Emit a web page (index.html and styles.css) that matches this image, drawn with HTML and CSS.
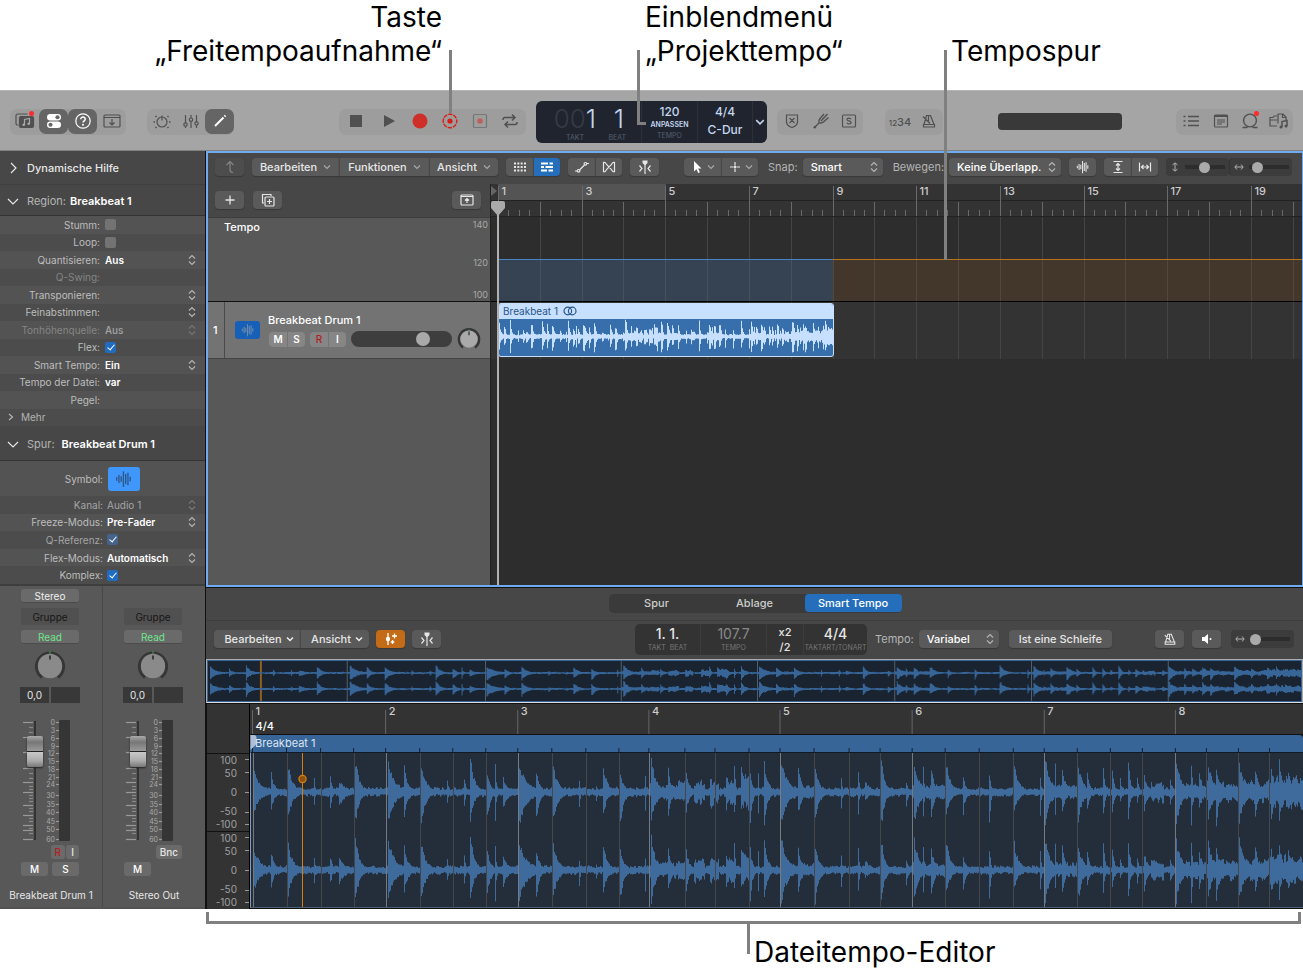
FILE: index.html
```html
<!DOCTYPE html>
<html lang="de">
<head>
<meta charset="utf-8">
<title>Dateitempo-Editor</title>
<link rel="stylesheet" href="styles.css">
</head>
<body>
<svg class="sprite" aria-hidden="true">
  <symbol id="updown" viewBox="0 0 8 12"><path d="M1 4.5 4 1.5 7 4.5M1 7.5 4 10.5 7 7.5"/></symbol>
  <symbol id="down" viewBox="0 0 8 6"><path d="M1 1.5 4 4.5 7 1.5"/></symbol>
  <symbol id="wave" viewBox="0 0 16 16"><path d="M1.500 6.500v3M3.500 4.500v7M5.500 5.500v5M7.500 1v14M9.500 3.500v9M11.500 2.500v11M13.500 6v4"/></symbol>
  <symbol id="metronome" viewBox="0 0 16 16"><path d="M5.500 2.500h4l3.500 9H3zM2.500 11.500h11v2.500h-11zM9 10.500 2 3.500"/><path d="M7.500 2.500v6"/></symbol>
  <symbol id="catch" viewBox="0 0 16 16"><path d="M5.500 1.500h5v2.500l-2 2h-1l-2-2z" fill="currentColor" stroke="none"/><path d="M8 5v10M2.500 6.500 5 9.500l-2.500 3M13.500 6.500 11 9.500l2.500 3"/></symbol>
  <symbol id="horiz" viewBox="0 0 12 10"><path d="M3.500 2 1 5l2.500 3M8.500 2 11 5 8.500 8M1.500 5h9"/></symbol>
</svg>

<header class="callouts">
  <p class="callout callout-right">Taste<br>„Freitempoaufnahme“</p>
  <p class="callout callout-mid">Einblendmenü<br>„Projekttempo“</p>
  <p class="callout callout-low">Tempospur</p>
</header>

<div class="app">
  <div class="lead lead-record"></div>
  <div class="lead lead-tempo"></div>
  <div class="lead lead-track"></div>

  <div class="control-bar">
    <div class="pill">
      <button class="tool w29" aria-label="Bibliothek"><svg class="i20" viewBox="0 0 20 20"><path d="M3.500 14H2.500a1.500 1.500 0 0 1-1.500-1.500v-8A1.500 1.500 0 0 1 2.500 3h10"/><rect x="4.500" y="5.500" width="14" height="11" rx="1.500" fill="currentColor"/><path d="M9.500 13.500v-5l5-1v5" stroke="#aaa"/><circle cx="8.700" cy="13.700" r="1.300" fill="#aaa" stroke="none"/><circle cx="13.700" cy="12.700" r="1.300" fill="#aaa" stroke="none"/></svg><i class="dot"></i></button>
      <button class="tool w29 on" aria-label="Informationen"><svg class="i20" viewBox="0 0 20 20"><rect x="3" y="3" width="14" height="6.500" rx="3.250" fill="currentColor" stroke="none"/><rect x="3" y="10.500" width="14" height="6.500" rx="3.250" fill="currentColor" stroke="none"/><circle cx="13.500" cy="6.250" r="2.100" fill="#666" stroke="none"/><circle cx="6.500" cy="13.750" r="2.100" fill="#666" stroke="none"/></svg></button>
      <button class="tool w29 on" aria-label="Schnellhilfe"><svg class="i20" viewBox="0 0 20 20"><circle cx="10" cy="10" r="7.200"/><path d="M7.800 8.200c0-3 4.500-2.800 4.400 0 0 1.600-2.200 1.700-2.200 3.400" stroke-width="1.500"/><circle cx="10" cy="13.700" r="1" fill="currentColor" stroke="none"/></svg></button>
      <button class="tool w29" aria-label="Symbolleiste"><svg class="i20" viewBox="0 0 20 20"><rect x="2" y="4" width="16" height="12" rx="1"/><path d="M2 6.500h16M10 8v6M7.500 11.500 10 14l2.500-2.500"/></svg></button>
    </div>
    <div class="pill m21">
      <button class="tool w29" aria-label="Smart Controls"><svg class="i20" viewBox="0 0 20 20"><circle cx="10" cy="11" r="5"/><path d="M10 4.500v5"/><path d="M1.500 11h1.500M17 11h1.500M3.500 5l1 1M16.500 5l-1 1M3.500 17l1-1M16.500 17l-1-1" stroke-width="1.600"/></svg></button>
      <button class="tool w29" aria-label="Mixer"><svg class="i20" viewBox="0 0 20 20"><path d="M4.500 4v8M4.500 15.500v1.500M10 4v3M10 10.500v6.500M15.500 4v7M15.500 14.500v2.500"/><circle cx="4.500" cy="13.500" r="1.700"/><circle cx="10" cy="8.700" r="1.700"/><circle cx="15.500" cy="12.500" r="1.700"/></svg></button>
      <button class="tool w29 on" aria-label="Editoren"><svg class="i20" viewBox="0 0 20 20"><path d="m5 15 8.500-8.500" stroke-width="2"/><path d="m14.500 5.500 1-1" stroke-width="2"/></svg></button>
    </div>
    <div class="pill transport">
      <button class="tool w33" aria-label="Stopp"><svg class="i20" viewBox="0 0 20 20"><rect x="4" y="4" width="12" height="12" fill="currentColor" stroke="none"/></svg></button>
      <button class="tool w33" aria-label="Wiedergabe"><svg class="i20" viewBox="0 0 20 20"><path d="M5 4v12l11-6z" fill="currentColor" stroke="none"/></svg></button>
      <button class="tool w30 red" aria-label="Aufnahme"><svg class="i20" viewBox="0 0 20 20"><circle cx="10" cy="10" r="7.500" fill="currentColor" stroke="none"/></svg></button>
      <button class="tool w30 bright" aria-label="Freitempoaufnahme"><svg class="i20" viewBox="0 0 20 20"><circle cx="10" cy="10" r="6.800" stroke-width="1.400" stroke-dasharray="4.340 1" stroke-dashoffset="2"/><circle cx="10" cy="10" r="2.600" fill="currentColor" stroke="none"/></svg></button>
      <button class="tool w29" aria-label="Als Aufnahme erfassen"><svg class="i20 dim" viewBox="0 0 20 20"><rect x="3.500" y="3.500" width="13" height="13" rx="1"/><circle cx="10" cy="10" r="2.800" fill="#e02020" stroke="none"/></svg></button>
      <button class="tool w32" aria-label="Cycle"><svg class="i20" viewBox="0 0 20 20"><path d="M3 9V8.500a2 2 0 0 1 2-2h9M12 3.500l3 3-3 3M17 11v.5a2 2 0 0 1-2 2H6M8 10.500l-3 3 3 3" stroke-width="1.500"/></svg></button>
    </div>
    <div class="lcd">
      <div class="lcd-pos"><span class="big"><i>00</i>1</span><small>TAKT</small></div>
      <div class="lcd-pos lcd-beat"><span class="big">1</span><small>BEAT</small></div>
      <div class="lcd-tempo"><b>120</b><strong>ANPASSEN</strong><small>TEMPO</small></div>
      <div class="lcd-key"><b>4/4</b><b>C-Dur</b></div>
      <button class="lcd-more" aria-label="Display-Optionen"><svg class="i10" viewBox="0 0 8 6"><path d="M1 1.500 4 4.500 7 1.500"/></svg></button>
    </div>
    <div class="pill m10">
      <button class="tool w29" aria-label="Ersetzen"><svg class="i20" viewBox="0 0 20 20"><path d="M4.500 4h11v7c0 3-2.500 4.500-5.500 5.500-3-1-5.500-2.500-5.500-5.500zM7.500 7l5 5M12.500 7l-5 5"/></svg></button>
      <button class="tool w29" aria-label="Stimmgerät"><svg class="i20" viewBox="0 0 20 20"><path d="M3 17l1.500-1.500" stroke-width="2.400"/><path d="M4 16l4.500-4.500M8.300 11.700C7.500 10 7.800 8.800 9.500 7L13 3M8.300 11.700c1.700.8 3 .4 4.700-1.200l4.500-4M10 10l6.500-7" stroke-width="1.400"/></svg></button>
      <button class="tool w28" aria-label="Solo"><svg class="i20" viewBox="0 0 20 20"><rect x="3.500" y="4" width="13" height="12" rx="1"/><path d="M12 8.300c-.5-1.600-4-1.600-4 .1 0 1.900 4.200 1 4.200 3.100 0 1.800-3.900 1.900-4.400.1"/></svg></button>
    </div>
    <div class="pill m22">
      <button class="tool w30 count" aria-label="Einzähler"><small>12</small>34</button>
      <button class="tool w28" aria-label="Metronom"><svg class="i16"><use href="#metronome"/></svg></button>
    </div>
    <div class="master"></div>
    <div class="pill last">
      <button class="tool w30" aria-label="Listeneditoren"><svg class="i20" viewBox="0 0 20 20"><path d="M7 5.500h11M7 10h11M7 14.500h11M2.500 5.500h2M2.500 10h2M2.500 14.500h2" stroke-width="1.400"/></svg></button>
      <button class="tool w29" aria-label="Notizblock"><svg class="i20" viewBox="0 0 20 20"><rect x="3.500" y="4" width="13" height="12" rx="1"/><path d="M3.500 5.500h13M3.500 4.500h13M6 9h8M6 11h8M6 13h5"/></svg></button>
      <button class="tool w29" aria-label="Loops"><svg class="i20" viewBox="0 0 20 20"><circle cx="10" cy="9.500" r="6.400" stroke-width="1.400"/><path d="M2.500 16.500h4l1.500-1M17.500 16.500h-4l-1.500-1" stroke-width="1.400"/></svg><i class="dot"></i></button>
      <button class="tool w29" aria-label="Browser"><svg class="i20" viewBox="0 0 20 20"><path d="M8 15H1V6.500h3l1-1.500h3M1 9h7M9 12.500V3h5l3 3v3M13.500 3v3.500H17"/><path d="M13 16v-5.500l5-1V15" stroke-width="1.500"/><circle cx="12" cy="16" r="1.500" fill="currentColor" stroke="none"/><circle cx="17" cy="15" r="1.500" fill="currentColor" stroke="none"/></svg></button>
    </div>
  </div>

  <div class="workspace">
    <aside class="sidebar">
      <h2 class="sec"><svg class="i12" viewBox="0 0 12 12"><path d="M4 1 9 6 4 11"/></svg><b>Dynamische Hilfe</b></h2>
      <h2 class="sec sec-region"><svg class="i12" viewBox="0 0 12 12"><path d="M1 4 6 9 11 4"/></svg><span>Region:</span><strong>Breakbeat 1</strong></h2>
      <div class="rows region-rows">
        <div class="row"><label for="r1">Stumm:</label><input id="r1" type="checkbox"></div>
        <div class="row"><label for="r2">Loop:</label><input id="r2" type="checkbox"></div>
        <div class="row"><label for="r3">Quantisieren:</label><select id="r3"><option>Aus</option></select><svg class="ud"><use href="#updown"/></svg></div>
        <div class="row off"><label for="r4">Q-Swing:</label><output id="r4"></output></div>
        <div class="row"><label for="r5">Transponieren:</label><select id="r5"><option></option></select><svg class="ud"><use href="#updown"/></svg></div>
        <div class="row"><label for="r6">Feinabstimmen:</label><select id="r6"><option></option></select><svg class="ud"><use href="#updown"/></svg></div>
        <div class="row off"><label for="r7">Tonhöhenquelle:</label><select id="r7" disabled><option>Aus</option></select><svg class="ud"><use href="#updown"/></svg></div>
        <div class="row"><label for="r8">Flex:</label><input id="r8" type="checkbox" checked></div>
        <div class="row"><label for="r9">Smart Tempo:</label><select id="r9"><option>Ein</option></select><svg class="ud"><use href="#updown"/></svg></div>
        <div class="row"><label for="r10">Tempo der Datei:</label><output id="r10">var</output></div>
        <div class="row"><label for="r11">Pegel:</label><output id="r11"></output></div>
        <button class="more"><svg class="i8" viewBox="0 0 8 8"><path d="M2 1 5.500 4 2 7"/></svg>Mehr</button>
      </div>
      <h2 class="sec sec-track"><svg class="i12" viewBox="0 0 12 12"><path d="M1 4 6 9 11 4"/></svg><span>Spur:</span><strong class="wide">Breakbeat Drum 1</strong></h2>
      <div class="row symbol-row"><label for="t0">Symbol:</label><button id="t0" class="symbol"><svg class="i18"><use href="#wave"/></svg></button></div>
      <div class="rows track-rows">
        <div class="row semi"><label for="t1">Kanal:</label><select id="t1" disabled><option>Audio 1</option></select><svg class="ud"><use href="#updown"/></svg></div>
        <div class="row"><label for="t2">Freeze-Modus:</label><select id="t2"><option>Pre-Fader</option></select><svg class="ud"><use href="#updown"/></svg></div>
        <div class="row semi"><label for="t3">Q-Referenz:</label><input id="t3" type="checkbox" checked disabled></div>
        <div class="row"><label for="t4">Flex-Modus:</label><select id="t4"><option>Automatisch</option></select><svg class="ud"><use href="#updown"/></svg></div>
        <div class="row"><label for="t5">Komplex:</label><input id="t5" type="checkbox" checked></div>
      </div>
      <div class="mixer">
        <section class="strip">
          <button class="chip">Stereo</button>
          <button class="chip flat">Gruppe</button>
          <button class="chip read">Read</button>
          <svg class="knob" viewBox="0 0 32 32"><path d="M8 27.500a13.600 13.600 0 1 1 16 0" class="ring"/><circle cx="16" cy="16" r="12.200"/><path d="M16 5.500v4" class="tick"/><path d="M16 1v3" class="mark"/></svg>
          <div class="values"><span>0,0</span><span></span></div>
          <div class="fader"><svg class="scale"></svg><input type="range" aria-label="Lautstärke Breakbeat Drum 1" min="0" max="100" value="82"></div>
          <div class="ri"><button class="rec">R</button><button>I</button></div>
          <div class="ms"><button>M</button><button>S</button></div>
          <p>Breakbeat Drum 1</p>
        </section>
        <section class="strip">
          <span class="chip-space"></span>
          <button class="chip flat">Gruppe</button>
          <button class="chip read">Read</button>
          <svg class="knob" viewBox="0 0 32 32"><path d="M8 27.500a13.600 13.600 0 1 1 16 0" class="ring"/><circle cx="16" cy="16" r="12.200"/><path d="M16 5.500v4" class="tick"/><path d="M16 1v3" class="mark"/></svg>
          <div class="values"><span>0,0</span><span></span></div>
          <div class="fader"><svg class="scale"></svg><input type="range" aria-label="Lautstärke Stereo Out" min="0" max="100" value="82"></div>
          <div class="ri"><button>Bnc</button></div>
          <div class="ms"><button>M</button></div>
          <p>Stereo Out</p>
        </section>
      </div>
    </aside>

    <main class="main">
      <section class="arrange">
        <div class="bar">
          <button class="btn w29 faint" aria-label="Zurück"><svg class="i14" viewBox="0 0 14 14"><path d="M3.500 5 7 1.500 10.500 5M7 2v7.500q0 3 3 3"/></svg></button>
          <div class="group m8">
            <button class="btn menu w87">Bearbeiten<svg class="dn"><use href="#down"/></svg></button>
            <button class="btn menu w90">Funktionen<svg class="dn"><use href="#down"/></svg></button>
            <button class="btn menu w69">Ansicht<svg class="dn"><use href="#down"/></svg></button>
          </div>
          <div class="group m8">
            <button class="btn w27" aria-label="Raster"><svg class="i14" viewBox="0 0 14 14"><path d="M1 3.500h12M1 7h12M1 10.500h12" stroke-width="2" stroke-dasharray="2 1.330"/></svg></button>
            <button class="btn w27 blue" aria-label="Spuren"><svg class="i14" viewBox="0 0 14 14"><path d="M1 3.500h7M9.500 3.500H13M1 7h3M5.500 7H13M1 10.500h6M8.500 10.500H13" stroke-width="2"/></svg></button>
          </div>
          <div class="group m8">
            <button class="btn w27" aria-label="Automation"><svg class="i14" viewBox="0 0 14 14"><path d="M0 11h2.500M4.500 10 9.500 5M11.500 3.500H14"/><circle cx="3.600" cy="10.800" r="1.300"/><circle cx="10.400" cy="3.800" r="1.300"/></svg></button>
            <button class="btn w27" aria-label="Flex"><svg class="i14" viewBox="0 0 14 14"><path d="M1.500 2v10M12.500 2v10M1.500 2q2 0 3.500 3l4 4q1.500 3 3.500 3M12.500 2q-2 0-3.500 3L5 9q-1.500 3-3.500 3"/></svg></button>
          </div>
          <button class="btn w29 m8" aria-label="Playhead folgen"><svg class="i16"><use href="#catch"/></svg></button>
          <div class="group m25">
            <button class="btn w37 tooltype" aria-label="Zeiger-Werkzeug"><svg class="i14" viewBox="0 0 14 14"><path d="M4 1v10.500l2.500-2.200 1.700 3.700 1.700-.8L8.200 8.600h3.300z" fill="#fff" stroke="none"/></svg><svg class="dn"><use href="#down"/></svg></button>
            <button class="btn w37 tooltype" aria-label="Marquee-Werkzeug"><svg class="i14" viewBox="0 0 14 14"><path d="M7 2v3.500M7 8.500V12M2 7h3.500M8.500 7H12"/><circle cx="7" cy="7" r=".7"/></svg><svg class="dn"><use href="#down"/></svg></button>
          </div>
          <label class="cap m10" for="snap">Snap:</label>
          <span class="pick w80"><select id="snap"><option>Smart</option></select><svg class="ud"><use href="#updown"/></svg></span>
          <label class="cap m10" for="move">Bewegen:</label>
          <span class="pick w112"><select id="move"><option>Keine Überlapp.</option></select><svg class="ud"><use href="#updown"/></svg></span>
          <button class="btn w27 m8" aria-label="Wellenform-Zoom"><svg class="i14"><use href="#wave"/></svg></button>
          <div class="group m8">
            <button class="btn w27" aria-label="Vertikal zoomen"><svg class="i14" viewBox="0 0 14 14"><path d="M2.500 1.500h9M2.500 12.500h9M7 3.500v7M5 5.500l2-2 2 2M5 8.500l2 2 2-2"/></svg></button>
            <button class="btn w27" aria-label="Horizontal zoomen"><svg class="i14" viewBox="0 0 14 14"><path d="M1.500 2.500v9M12.500 2.500v9M3.500 7h7M5.500 5l-2 2 2 2M8.500 5l2 2-2 2"/></svg></button>
          </div>
          <div class="zoom m8"><svg class="i10" viewBox="0 0 10 12"><path d="M2 3.500 5 1l3 2.500M2 8.500 5 11l3-2.500M5 1.500v9"/></svg><input type="range" aria-label="Vertikaler Zoom" value="48"></div>
          <div class="zoom second"><svg class="i10"><use href="#horiz"/></svg><input type="range" aria-label="Horizontaler Zoom" value="10"></div>
        </div>
        <div class="tracks">
          <div class="heads">
            <div class="head-tools">
              <button class="btn w29" aria-label="Spur hinzufügen"><svg class="i14" viewBox="0 0 14 14"><path d="M7 2.500v9M2.500 7h9" stroke-width="1.300"/></svg></button>
              <button class="btn w29" aria-label="Spur duplizieren"><svg class="i14" viewBox="0 0 14 14"><path d="M3 10H1.500V1.500H10V3M8.500 6v5M6 8.500h5"/><rect x="4" y="4" width="9" height="9" rx="1"/></svg></button>
              <button class="btn w29 end" aria-label="Globale Spuren"><svg class="i14" viewBox="0 0 14 14"><rect x="1" y="2" width="12" height="10" rx="1"/><path d="M1 3.500h12M7 10V6M5 7.500l2-2 2 2"/></svg></button>
            </div>
            <div class="tempo-head"><span>Tempo</span><div class="tempo-scale"><i>140</i><i>120</i><i>100</i></div></div>
            <div class="track-head">
              <span class="num">1</span>
              <span class="badge"><svg class="i14"><use href="#wave"/></svg></span>
              <div class="track-info">
                <b>Breakbeat Drum 1</b>
                <div class="track-ctl">
                  <div class="group"><button>M</button><button>S</button></div>
                  <div class="group"><button class="rec">R</button><button>I</button></div>
                  <input class="vol" type="range" aria-label="Spurlautstärke" value="75">
                </div>
              </div>
              <svg class="knob small" viewBox="0 0 32 32"><path d="M8 27.500a13.600 13.600 0 1 1 16 0" class="ring"/><circle cx="16" cy="16" r="11.500"/><path d="M16 6v5" class="tick"/><path d="M16 3v3" class="mark"/></svg>
            </div>
          </div>
          <div class="timeline">
            <svg class="ruler" id="ruler"></svg>
            <div class="tempo-lane"><svg class="gridlines"></svg><div class="tempo-blue"></div><div class="tempo-orange"></div></div>
            <div class="track-lane"><svg class="gridlines"></svg>
              <div class="region"><div class="region-name">Breakbeat 1 <svg class="loops" viewBox="0 0 14 10"><circle cx="4.800" cy="5" r="3.800"/><circle cx="9.200" cy="5" r="3.800"/></svg></div><svg id="regionWave" viewBox="0 0 334 38" preserveAspectRatio="none"></svg></div>
            </div>
            <div class="playhead"><svg viewBox="0 0 14 15"><path d="M2 0h10q2 0 2 2v5l-7 8-7-8V2q0-2 2-2z"/></svg></div>
          </div>
        </div>
      </section>

      <section class="editor">
        <div class="tabs"><div class="tabset"><button>Spur</button><button>Ablage</button><button class="active">Smart Tempo</button></div></div>
        <div class="bar editor-bar">
          <div class="side">
            <div class="group"><button class="btn menu w86">Bearbeiten<svg class="dn"><use href="#down"/></svg></button><button class="btn menu w69">Ansicht<svg class="dn"><use href="#down"/></svg></button></div>
            <button class="btn w29 orange" aria-label="Tempo bearbeiten"><svg class="i14" viewBox="0 0 14 14"><path d="M4 1v12" stroke-width="1.300"/><circle cx="4" cy="7" r="2.200" fill="#fff" stroke="none"/><path d="M10.500 1.500v5M8 4h5M8.500 8v4M6.800 10h3.500" stroke-width="1.300"/></svg></button>
            <button class="btn w29" aria-label="Playhead folgen"><svg class="i16"><use href="#catch"/></svg></button>
          </div>
          <div class="readout">
            <div class="c1"><b>1. 1.</b><small>TAKT&nbsp; BEAT</small></div>
            <div class="c2"><b>107.7</b><small>TEMPO</small></div>
            <div class="c3"><button>x2</button><button>/2</button></div>
            <div class="c4"><b>4/4</b><small>TAKTART/TONART</small></div>
          </div>
          <label class="cap m8" for="vari">Tempo:</label>
          <span class="pick w80"><select id="vari"><option>Variabel</option></select><svg class="ud"><use href="#updown"/></svg></span>
          <button class="btn w103 m10">Ist eine Schleife</button>
          <button class="btn w29 end" aria-label="Klick"><svg class="i14"><use href="#metronome"/></svg></button>
          <button class="btn w29 m8" aria-label="Vorhören"><svg class="i14" viewBox="0 0 14 14"><path d="M2 5h2.500L8 2v10L4.500 9H2z" fill="#fff" stroke="none"/><circle cx="10.500" cy="7" r="1" fill="#fff" stroke="none"/></svg></button>
          <div class="zoom m10"><svg class="i10"><use href="#horiz"/></svg><input type="range" aria-label="Zoom" value="0"></div>
        </div>
        <div class="overview"><svg id="overviewWave" viewBox="0 0 1095 40" preserveAspectRatio="none"></svg></div>
        <div class="file">
          <div class="gutter">
            <div class="gutter-top"></div>
            <div class="amps"><i>100</i><i>50</i><i>0</i><i>-50</i><i>-100</i></div>
            <div class="amps"><i>100</i><i>50</i><i>0</i><i>-50</i><i>-100</i></div>
          </div>
          <div class="file-body">
            <svg class="file-ruler" id="fileRuler"></svg>
            <div class="file-name"><svg class="flag" viewBox="0 0 6 15"><path d="M0 0h3q3 0 3 3v6L0 15z"/></svg><span>Breakbeat 1</span><svg class="ticks" id="fileTicks"></svg></div>
            <div class="file-wave"><svg id="fileWave" viewBox="0 0 1052 154" preserveAspectRatio="none"></svg><svg id="fileBeats"></svg></div>
          </div>
        </div>
      </section>
    </main>
  </div>
</div>

<footer class="foot">
  <div class="bracket"></div>
  <p class="foot-label">Dateitempo-Editor</p>
</footer>
<script src="app.js"></script>
</body>
</html>
```
FILE: styles.css
```css
* { box-sizing: border-box; }
body { margin: 0; background: #fff; color: #e6e6e6; font: 11px/14px Inter, "Liberation Sans", sans-serif; }
p, h2 { margin: 0; font-weight: 400; }
i { font-style: normal; }
button, select, input { margin: 0; padding: 0; border: 0; font: inherit; color: inherit; background: none; }
button { display: flex; align-items: center; justify-content: center; white-space: nowrap; }
select { appearance: none; outline: 0; }
svg { display: block; flex: none; fill: none; stroke: currentColor; stroke-width: 1.2; stroke-linecap: butt; }
.sprite { position: absolute; width: 0; height: 0; }
.i8 { width: 8px; height: 8px; }
.i10 { width: 10px; height: 10px; }
.i12 { width: 12px; height: 12px; }
.i14 { width: 14px; height: 14px; }
.i16 { width: 16px; height: 16px; }
.i18 { width: 18px; height: 18px; }
.i20 { width: 20px; height: 20px; }
.w27 { width: 27px; }
.w28 { width: 28px; }
.w29 { width: 29px; }
.w30 { width: 30px; }
.w32 { width: 32px; }
.w33 { width: 33px; }
.w37 { width: 37px; }
.w69 { width: 69px; }
.w80 { width: 80px; }
.w86 { width: 86px; }
.w87 { width: 87px; }
.w90 { width: 90px; }
.w103 { width: 103px; }
.w112 { width: 112px; }
.m8 { margin-left: 8px; }
.m10 { margin-left: 10px; }
.m21 { margin-left: 21px; }
.m22 { margin-left: 22px; }
.m25 { margin-left: 25px; }

/* Callouts */
.callouts { display: grid; grid-template-columns: 442px 509px 1fr; height: 90px; color: #000; }
.callout { font-size: 28px; line-height: 34px; white-space: nowrap; }
.callout-right { text-align: right; }
.callout-mid { padding-left: 203px; }
.callout-low { padding-top: 34px; }
.callouts, .foot-label { font-size: 28px; }
.lead { position: absolute; z-index: 5; width: 3px; background: #808080; }
.lead-record { left: 449px; top: -40px; height: 63px; }
.lead-tempo { left: 637px; top: -40px; width: 9px; height: 75px; background: none; border: solid #808080; border-width: 0 0 3px 3px; }
.lead-track { left: 944px; top: -40px; height: 210px; }
.foot { color: #000; padding: 3px 2px 2px 206px; }
.bracket { height: 12px; border: solid #808080; border-width: 0 3px 3px; }
.foot-label { margin-left: 541px; padding: 11px 0 0 7px; background: linear-gradient(#808080, #808080) left top / 3px 30px no-repeat; line-height: 35px; }

/* Control bar */
.app { position: relative; background: #1a1a1a; }
.control-bar { display: flex; align-items: center; height: 61px; padding: 2px 10px 0; background: #a5a5a5; border-top: 1px solid #b4b4b4; border-bottom: 1px solid #808080; }
.pill { display: flex; height: 26px; border-radius: 7px; background: #9d9d9d; color: #505050; }
.tool { position: relative; height: 25px; border-radius: 7px; }
.tool.on { background: #656565; color: #fff; }
.dot { position: absolute; right: 5px; top: 2px; width: 5px; height: 5px; border-radius: 50%; background: #ff2a2a; }
.transport { margin-left: 105px; }
.red { color: #ce3029; }
.bright { color: #d81d16; }
.dim { opacity: .5; }
.count { font-size: 11px; font-weight: 500; align-items: baseline; padding-top: 6px; }
.count small { font-size: 8px; }
.lcd { display: grid; grid-template-columns: 60px 45px 56px 55px 15px; width: 231px; height: 42px; margin-left: 10px; border-radius: 6px; background: #20242f; color: #c3d6ee; }
.lcd > * { display: flex; flex-direction: column; align-items: center; }
.lcd small { color: #56606f; font-size: 7px; line-height: 9px; }
.lcd .lcd-pos { align-items: flex-end; padding-top: 4px; }
.lcd-pos small { padding-right: 12px; }
.big { font-size: 26px; line-height: 28px; font-weight: 300; }
.big i { color: #363b46; }
.lcd-beat { padding-right: 5px; }
.lcd-beat .big { padding-right: 12px; }
.lcd-beat small { padding-right: 10px; }
.lcd-tempo, .lcd-key { border-left: 1px solid #2c303b; }
.lcd-tempo { padding-top: 4px; }
.lcd-tempo b, .lcd-key b { font-size: 12px; font-weight: 500; }
.lcd-tempo strong { font-size: 7px; line-height: 11px; font-weight: 600; }
.lcd-tempo small { line-height: 11px; }
.lcd-key { justify-content: space-between; padding: 4px 0 6px; }
.lcd-more { justify-content: center; border-left: 1px solid #2c303b; }
.master { width: 124px; height: 17px; margin-left: 55px; border-radius: 4px; background: #393939; }
.last { margin-left: auto; }

/* Sidebar */
.workspace { display: flex; }
.sidebar { width: 205px; background: #535353; }
.sec { display: flex; align-items: center; height: 34px; padding-left: 7px; border-bottom: 1px solid #3f3f3f; background: #474747; font-size: 11px; }
.sec-region { height: 31px; padding-top: 2px; border-bottom-color: #333; }
.sec-track { height: 35px; padding-top: 2px; border-bottom-color: #333; }
.sec b { margin-left: 8px; font-weight: 500; }
.sec span { margin-left: 8px; color: #b4b4b4; }
.sec strong { margin-left: 4px; color: #fff; font-weight: 600; }
.sec .wide { margin-left: 7px; }
.rows { display: grid; grid-auto-rows: 1fr; }
.region-rows { height: 210px; }
.track-rows { height: 88px; }
.row { display: flex; align-items: center; padding-right: 9px; font-size: 10px; line-height: 14px; }
.region-rows > :nth-child(even), .track-rows > :nth-child(odd) { background: #4c4c4c; }
.row label { flex: none; width: 100px; margin-right: 5px; text-align: right; color: #bdbdbd; }
.track-rows .row label, .symbol-row label { width: 103px; margin-right: 4px; }
.row select, .row output { flex: 1; min-width: 0; color: #fff; font-weight: 600; opacity: 1; }
.off label, .off svg { color: #858585; }
.off select { color: #a4a4a4; font-weight: 500; }
.semi label { color: #a4a4a4; }
.semi select { color: #a4a4a4; font-weight: 400; }
.ud { width: 8px; height: 12px; color: #b4b4b4; }
.semi .ud, .off .ud { color: #777; }
input[type=checkbox] { appearance: none; display: flex; align-items: center; justify-content: center; width: 11px; height: 11px; border-radius: 2px; background: #737373; }
input[type=checkbox]:checked { background: #1f6cc0; }
input[type=checkbox]:disabled { background: #44648c; }
input[type=checkbox]:checked::before { content: ""; width: 3px; height: 6px; margin-bottom: 2px; border: solid #fff; border-width: 0 1px 1px 0; transform: rotate(40deg); }
.more { justify-content: flex-start; gap: 6px; padding-left: 7px; font-size: 10px; color: #b4b4b4; }
.symbol-row { height: 35px; }
.symbol { width: 32px; height: 24px; border-radius: 3px; background: #3f97fb; color: #2d5788; margin-left: 1px; }
.mixer { display: grid; grid-template-columns: 102px 1fr; height: 323px; border-top: 2px solid #3e3e3e; background: #585858; }
.strip { position: relative; display: flex; flex-direction: column; padding: 3px 23px 0 21px; }
.strip + .strip { border-left: 1px solid #484848; }
.chip { height: 14px; border-radius: 3px; background: #6a6a6a; font-size: 10px; color: #eee; border-bottom: 1px solid #4b4b4b; }
.chip-space { height: 14px; }
.flat { height: 17px; margin: 5px 0; background: #505050; color: #161616; border-radius: 2px; border: 0; }
.read { color: #6ee78a; }
.knob { width: 32px; height: 32px; margin: 6px auto 5px; stroke: none; fill: #8a8a8a; }
.knob .ring { fill: none; stroke: #363636; stroke-width: 3; }
.knob .tick { stroke: #222; stroke-width: 1.5; }
.knob .mark { stroke: #3d9b50; stroke-width: 1; }
.values { display: flex; justify-content: space-between; margin: 0 -1px; }
.values span { width: 29px; height: 16px; background: #383838; font-size: 10px; line-height: 16px; text-align: center; }
.fader { position: relative; height: 122px; margin: 17px 0 3px; }
.scale { width: 58px; height: 122px; overflow: visible; font-size: 7px; }
.fader input { position: absolute; left: 6px; top: 0; width: 16px; height: 121px; appearance: none; writing-mode: vertical-lr; direction: rtl; }
.fader input::-webkit-slider-thumb { appearance: none; width: 16px; height: 31px; border-radius: 2px; background: linear-gradient(#aaa, #777 20%, #999 48%, #222 49%, #222 52%, #c8c8c8 53%, #aaa 80%, #777); box-shadow: 0 1px 2px #222; }
.ri, .ms { display: flex; justify-content: flex-end; height: 14px; margin-bottom: 3px; font-size: 10px; font-weight: 500; }
.ri button { min-width: 13px; padding: 0 4px; border-radius: 3px; background: #6a6a6a; }
.ri button + button { margin-left: 1px; }
.ms { justify-content: flex-start; gap: 4px; }
.ms button { width: 27px; border-radius: 3px; background: #6a6a6a; color: #fff; }
.ri .rec, .track-ctl .rec { color: #b31f1f; }
.strip p { margin: 9px -20px 0 -18px; text-align: center; font-size: 10px; }

/* Shared toolbar */
.main { flex: 1; min-width: 0; padding-left: 1px; background: #111; }
.bar { display: flex; align-items: center; height: 31px; padding: 0 6px 3px 7px; background: #474747; }
.btn { height: 18px; border-radius: 4px; background: #5a5a5a; box-shadow: 0 1px 1px #383838; font-weight: 500; flex: none; }
.faint { background: #4d4d4d; color: #858585; }
.group { display: flex; flex: none; }
.group .btn { border-radius: 0; }
.group .btn + .btn { border-left: 1px solid #484848; }
.group .btn:first-child { border-radius: 4px 0 0 4px; }
.group .btn:last-child { border-radius: 0 4px 4px 0; }
.dn { width: 8px; height: 6px; color: #a8a8a8; }
.menu .dn { margin-left: 6px; }
.tooltype { gap: 3px; }
.editor-bar .menu { padding-left: 4px; }
.editor-bar .dn { margin-left: 4px; color: #eee; stroke-width: 1.5; }
.blue { background: #246ebc; color: #fff; }
.orange { background: #c36b16; color: #fff; }
.cap { color: #b4b4b4; margin-right: 5px; white-space: nowrap; }
.pick { display: flex; align-items: center; height: 18px; padding: 0 5px 0 8px; border-radius: 4px; background: #5a5a5a; box-shadow: 0 1px 1px #383838; font-weight: 500; flex: none; }
.pick select { flex: 1; min-width: 0; color: #fff; }
.zoom { display: flex; align-items: center; gap: 5px; width: 63px; height: 18px; padding-left: 4px; border-radius: 4px; background: #3c3c3c; color: #b4b4b4; flex: none; }
.second { border-left: 1px solid #333; }
.zoom input { appearance: none; width: 40px; height: 12px; background: linear-gradient(#2d2d2d, #2d2d2d) center / 100% 4px no-repeat; }
.zoom input::-webkit-slider-thumb { appearance: none; width: 11px; height: 11px; border-radius: 50%; background: #aaa; }
.end { margin-left: auto; }

/* Arrange area */
.arrange { border: 2px solid #6fabf0; border-right-width: 1px; }
.tracks { display: grid; grid-template-columns: 282px 1fr; min-height: 401px; }
.heads { background: #585858; }
.head-tools { display: flex; align-items: center; gap: 9px; height: 34px; padding: 0 9px 2px 7px; background: #474747; border-bottom: 1px solid #3e3e3e; }
.tempo-head { display: flex; justify-content: space-between; height: 84px; padding: 2px 2px 0 16px; color: #fff; font-weight: 500; border-bottom: 1px solid #111; }
.tempo-scale { display: flex; flex-direction: column; align-items: flex-end; color: #a8a8a8; font-size: 9px; line-height: 10px; font-weight: 400; }
.tempo-scale i:nth-child(2) { margin-top: 28px; }
.tempo-scale i:nth-child(3) { margin-top: 22px; }
.track-head { display: flex; align-items: center; height: 57px; background: #737373; border-bottom: 1px solid #444; }
.num { align-self: stretch; width: 17px; padding: 21px 0 0 5px; border-right: 1px solid #4a4a4a; color: #fff; font-weight: 500; }
.badge { display: flex; align-items: center; justify-content: center; width: 25px; height: 18px; margin: 0 8px 0 10px; border-radius: 3px; background: #1660b8; color: #6f8dac; }
.track-info b { display: block; padding-bottom: 4px; color: #fff; font-weight: 500; }
.track-ctl { display: flex; align-items: center; gap: 5px; padding-left: 1px; }
.track-ctl button { width: 18px; height: 15px; background: #868686; color: #fff; font-size: 10px; font-weight: 600; }
.track-ctl button + button { border-left: 1px solid #747474; }
.track-ctl .rec { font-weight: 500; }
.track-ctl .group button:first-child { border-radius: 4px 0 0 4px; }
.track-ctl .group button:last-child { border-radius: 0 4px 4px 0; }
.vol { appearance: none; width: 101px; height: 16px; border-radius: 8px; background: #3e3e3e; }
.vol::-webkit-slider-thumb { appearance: none; width: 14px; height: 14px; border-radius: 50%; background: #a9a9a9; }
.small { width: 24px; height: 24px; margin: 18px 0 0 5px; fill: #aaa; }
.timeline { position: relative; overflow: hidden; min-width: 0; background: #2d2d2d; border-left: 1px solid #222; }
.ruler { width: 100%; height: 33px; font-size: 11px; font-weight: 500; }
.ruler text, .file-ruler text, .scale text { stroke: none; fill: #ccc; }
.scale text { fill: #aaa; }
.tempo-lane { position: relative; height: 85px; border-bottom: 1px solid #000; }
.track-lane { position: relative; height: 57px; background: #333; }
.gridlines { width: 100%; height: 100%; }
.tempo-blue, .tempo-orange { position: absolute; top: 42px; bottom: 0; left: 7px; width: 335px; border-top: 1px solid #4a83c2; background: #41648a66; background-clip: padding-box; }
.tempo-orange { left: 342px; right: 0; width: auto; border-color: #b5741c; background-color: #784b264d; }
.region { position: absolute; left: 7px; top: 1px; width: 336px; height: 54px; overflow: hidden; border: 1px solid #c7e0ff; border-radius: 3px; background: #376fad; }
.region-name { display: flex; align-items: center; gap: 5px; height: 15px; padding: 0 0 2px 4px; background: #c7e0ff; color: #2b5487; font-size: 10px; }
.loops { width: 14px; height: 10px; }
#regionWave { width: 100%; height: 37px; fill: #c7e0ff; stroke: none; }
.playhead { position: absolute; left: 6px; top: 17px; bottom: 0; width: 2px; background: #b0b0b0; }
.playhead svg { width: 14px; height: 15px; margin-left: -6px; fill: #aaa; stroke: none; }

/* File tempo editor */
.editor { padding-top: 1px; }
.tabs { display: flex; justify-content: center; height: 33px; padding: 6px 0 0 1px; background: #474747; border-bottom: 1px solid #3e3e3e; }
.tabset { display: grid; grid-template-columns: 96px 100px 97px; height: 19px; border-radius: 5px; background: #3a3a3a; font-weight: 500; }
.tabset button { height: 18px; color: #ccc; }
.tabset .active { border-radius: 4px; background: #246ebc; color: #fff; }
.editor-bar { height: 38px; padding: 0 9px 2px 8px; }
.side { display: flex; gap: 7px; width: 421px; }
.readout { display: grid; grid-template-columns: 65px 66px 37px 64px; flex: none; height: 31px; border-radius: 5px; background: #333; }
.readout div { display: flex; flex-direction: column; align-items: center; justify-content: center; overflow: hidden; white-space: nowrap; }
.readout div + div { border-left: 1px solid #3c3c3c; }
.readout b { font-size: 14px; line-height: 18px; font-weight: 500; }
.readout small { font-size: 7px; line-height: 10px; color: #777; }
.readout .c2 b { color: #888; font-weight: 400; }
.readout button { height: 15px; font-weight: 500; }
.overview { height: 44px; border: 1px solid #aaa; border-bottom-color: #ddd; background: #192430; }
#overviewWave { width: 100%; height: 42px; fill: #376598; stroke: none; border: 1px solid #376598; }
.file { display: grid; grid-template-columns: 43px 1fr; margin-top: 1px; }
.gutter { margin-left: 1px; }
.gutter-top { height: 49px; margin-bottom: 1px; background: #333; }
.amps { display: flex; flex-direction: column; align-items: flex-end; height: 77px; padding: 0 12px 0 0; background: linear-gradient(#999, #999) right 5px / 4px 1px no-repeat, linear-gradient(#999, #999) right 18px / 4px 1px no-repeat, linear-gradient(#999, #999) right 38px / 4px 1px no-repeat, linear-gradient(#999, #999) right 58px / 4px 1px no-repeat, linear-gradient(#999, #999) right 70px / 4px 1px no-repeat, #333; color: #a0a0a0; font-size: 10px; line-height: 12px; }
.amps + .amps { margin-top: 1px; }
.amps i:nth-child(2) { margin-top: 1px; }
.amps i:nth-child(3), .amps i:nth-child(4) { margin-top: 7px; }
.amps i:nth-child(5) { margin-top: 1px; }
.file-body { min-width: 0; border-left: 1px solid #000; }
.file-ruler { width: 100%; height: 30px; background: #333; font-size: 11px; font-weight: 500; }
.file-ruler .sig { fill: #fff; }
.file-name { position: relative; height: 18px; border-top: 1px solid #111; border-radius: 0 4px 0 0; background: #376598; line-height: 16px; color: #dbe6f3; padding-left: 5px; }
.flag { position: absolute; left: 0; top: 0; width: 7px; height: 15px; fill: #aebfd2; stroke: none; }
.file-name span { position: relative; }
.ticks { position: absolute; left: 0; bottom: 0; width: 100%; height: 4px; }
.file-wave { position: relative; height: 156px; border-top: 1px solid #111a24; border-bottom: 1px solid #4a6078; border-left: 1px solid #7d9cbf; background: #242e3b; }
#fileWave { width: 100%; height: 100%; fill: #3f6b9c; stroke: none; }
#fileBeats { position: absolute; left: 0; top: 0; width: 100%; height: 100%; }
```
FILE: app.js
```js
const NS = 'http://www.w3.org/2000/svg';
function add(parent, tag, attrs, text) {
  const el = document.createElementNS(NS, tag);
  for (const k in attrs) el.setAttribute(k, attrs[k]);
  if (text !== undefined) el.textContent = text;
  parent.appendChild(el);
}
function vline(svg, x, y1, y2, color, width) {
  add(svg, 'line', { x1: x, x2: x, y1: y1, y2: y2, stroke: color, 'stroke-width': width || 1 });
}

/* Project ruler and grid */
const BAR = 41.83, START = 7.5;
const ruler = document.getElementById('ruler');
const grids = document.querySelectorAll('.gridlines');
function drawRuler() {
  const width = ruler.parentNode.clientWidth;
  ruler.replaceChildren();
  grids.forEach(g => g.replaceChildren());
  add(ruler, 'rect', { x: 0, y: 0, width: '100%', height: 33, fill: '#333', stroke: 'none' });
  add(ruler, 'rect', { x: 7, y: 0, width: 168, height: 16, fill: '#545454', stroke: 'none' });
  add(ruler, 'path', { d: 'M0 2v10l6-5z', fill: '#666', stroke: 'none' });
  add(ruler, 'line', { x1: 0, x2: '100%', y1: 16.5, y2: 16.5, stroke: '#222' });
  add(ruler, 'line', { x1: 0, x2: '100%', y1: 32.5, y2: 32.5, stroke: '#222' });
  for (let b = 0; START + b * BAR < width; b++) {
    const x = Math.floor(START + b * BAR) + 0.5;
    vline(ruler, x, b % 2 ? 18 : 2, 32, '#6a6a6a');
    for (let q = 1; q < 4; q++) vline(ruler, Math.floor(x + q * BAR / 4) + 0.5, 26, 32, '#6a6a6a');
    if (b % 2 === 0 && x + 20 < width) add(ruler, 'text', { x: x + 3, y: 11 }, b + 1);
    grids.forEach(g => vline(g, x, 0, '100%', '#454545'));
  }
}
drawRuler();
addEventListener('resize', drawRuler);

/* Channel strip scales */
document.querySelectorAll('.scale').forEach(s => {
  add(s, 'rect', { x: 38, y: 0, width: 11, height: 121, rx: 1, fill: '#353535', stroke: 'none' });
  add(s, 'rect', { x: 13, y: 1, width: 2, height: 119, fill: '#333', stroke: 'none' });
  [[0,2],[3,10],[6,18],[9,26],[12,33],[15,41],[18,49],[21,57],[24,64],[30,75],[35,84],[40,92],[45,101],[50,109],[60,119]].forEach(([n, y]) => {
    add(s, 'text', { x: 34, y: y + 3, 'text-anchor': 'end' }, n);
    add(s, 'line', { x1: 35, x2: 38, y1: y + 0.5, y2: y + 0.5, stroke: '#999' });
  });
  [2,17,32,48,62,72,85,95,105,110,119].forEach(y => add(s, 'line', { x1: 2, x2: 12, y1: y + 0.5, y2: y + 0.5, stroke: '#999' }));
  [7,12,53,58,66,69,75,78,81,88,91,98,101,108,113].forEach(y => add(s, 'line', { x1: 8, x2: 12, y1: y + 0.5, y2: y + 0.5, stroke: '#888' }));
});

/* Transients of the recording: position, peak above, peak below, decay */
const HITS = [
  [253,25,24,12],[271,20,18,6],[287.5,32,32,8],[314,15,15,2],[330.5,15,15,3],[339,11,14,14],[355.5,32,32,7],[388,32,31,12],[404,24,24,7],[421.5,28,30,8],
  [447,12,12,3],[464,15,13,3],[470.5,33,29,7],[487,20,28,6],[495,27,29,2],[503,14,16,9],[519,28,32,14],[536.5,20,25,6],[552.5,28,31,9],
  [579,12,17,2],[596,6,8,4],[603,28,24,7],[620,20,32,7],[645,15,23,1],[651,33,32,9],[668,22,23,6],[686,20,20,6],[711,12,15,4],[726,17,18,8],[734,26,22,2],[741,24,16,12],[750,22,32,4],
  [758,20,23,1],[764,32,32,6],[781.5,32,32,11],[798,23,23,7],[815,26,32,7],[841,14,17,2],[858,22,23,2],[865,10,8,12],[881.5,29,31,6],[906,10,15,4],
  [914,32,32,9],[923,26,23,2],[931,22,24,7],[946,30,24,8],[963,16,21,5],[989.5,21,31,2],[1013.5,32,22,8],[1040,18,23,2],[1045.5,32,32,9],[1055,26,23,1],
  [1062,25,23,6],[1078,28,31,8],[1087,19,17,5],[1103,30,27,3],[1112,22,22,4],[1120,13,10,4],[1128,32,31,4],[1137,15,13,3],[1144,17,20,7],[1170,11,12,6],
  [1176,30,32,10],[1191,29,31,3],[1199,21,19,6],[1208,28,28,9],[1216,23,31,7],[1239,30,31,10],[1255,24,23,6],[1271,21,25,10],[1279,32,31,5],[1288,19,20,10]];
/* Sustained passages: from, to, level */
const BEDS = [[253,1303,4],[649,678,7],[678,685,11],[694,704,11],[710,718,12],[726,735,12],[741,750,14],[780,815,6],[912,945,7],[1045,1077,7],[1151,1163,10],[1176,1206,8],[1206,1239,9],[1239,1270,10],[1270,1303,14]];
function noise(n) { const v = Math.sin(n * 127.1) * 43758.5453; return v - Math.floor(v); }
function level(x, side, salt) {
  let a = 0;
  for (const [f, t, l] of BEDS) if (x >= f && x <= t) a = Math.max(a, l * (0.6 + 0.6 * noise(Math.floor(x / 2) + side * 7 + salt)));
  for (const h of HITS) {
    const d = x - h[0];
    if (d >= 0 && d < 45) a = Math.max(a, h[1 + side] * (0.6 * Math.exp(-d / (h[3] * 0.35)) + 0.4 * Math.exp(-d / h[3])));
  }
  return a * (0.78 + 0.34 * noise(Math.floor(x) * 2 + side + salt));
}
function peak(x0, x1, side, salt) {
  let m = 0;
  for (let x = x0; x < x1; x += 0.5) m = Math.max(m, level(x, side, salt));
  return m;
}
function wave(svg, from, width, step, perPx, mid, gain, salt) {
  let up = '', dn = '';
  for (let px = from; px < width; px += step) {
    const x = 253 + (px - from) * perPx;
    const u = (mid - peak(x, x + perPx * step, 0, salt) * gain).toFixed(1);
    const v = (mid + peak(x, x + perPx * step, 1, salt) * gain).toFixed(1);
    up += `L${px} ${u}L${px + step} ${u}`;
    dn = `L${px + step} ${v}L${px} ${v}` + dn;
  }
  add(svg, 'path', { d: 'M' + from + ' ' + mid + up + dn + 'Z' });
}
const fileWave = document.getElementById('fileWave');
wave(fileWave, 2, 1052, 1, 1, 39, 1, 0);
wave(fileWave, 2, 1052, 1, 1, 117, 0.97, 50);
wave(document.getElementById('regionWave'), 0, 334, 1, 3.14, 18, 0.52, 0);
const ov = document.getElementById('overviewWave');
const ovBars = [139.5, 278, 414, 550.5, 688, 825, 962];
ovBars.forEach(x => vline(ov, x, 0, 40, '#555f68'));
vline(ov, 53, 0, 40, '#91601f', 2);
wave(ov, 2, 1095, 1, 0.961, 12, 0.24, 0);
wave(ov, 2, 1095, 1, 0.961, 28, 0.24, 50);

/* File ruler, beats and the selected tempo marker */
const BARS = [253, 386, 518, 649, 780, 912, 1044, 1175];
const BEATS = [287, 321, 354, 420, 453, 486, 552, 586, 619, 685, 715, 749, 814, 849, 880, 945, 979, 1013, 1077, 1110, 1142, 1206, 1238, 1269];
const pct = x => ((x + 0.5 - 251) / 1052 * 100).toFixed(3) + '%';
const fr = document.getElementById('fileRuler');
const ft = document.getElementById('fileTicks');
const fb = document.getElementById('fileBeats');
BEATS.forEach(x => { vline(fb, pct(x), 0, '100%', '#45474a'); vline(ft, pct(x), 0, 4, '#17212d'); });
BARS.forEach((x, i) => {
  vline(fr, pct(x), 6, 30, '#666');
  vline(fb, pct(x), 0, '100%', '#777b80');
  vline(ft, pct(x), 0, 4, '#17212d');
  add(fr, 'text', { x: pct(x + 3), y: 11 }, i + 1);
});
add(fr, 'text', { x: pct(256), y: 26, class: 'sig' }, '4/4');
vline(fb, pct(302), 0, '100%', '#db7f0b');
add(fb, 'circle', { cx: pct(302), cy: 26, r: 3.6, fill: '#8a5410', stroke: '#db7f0b' });
```
